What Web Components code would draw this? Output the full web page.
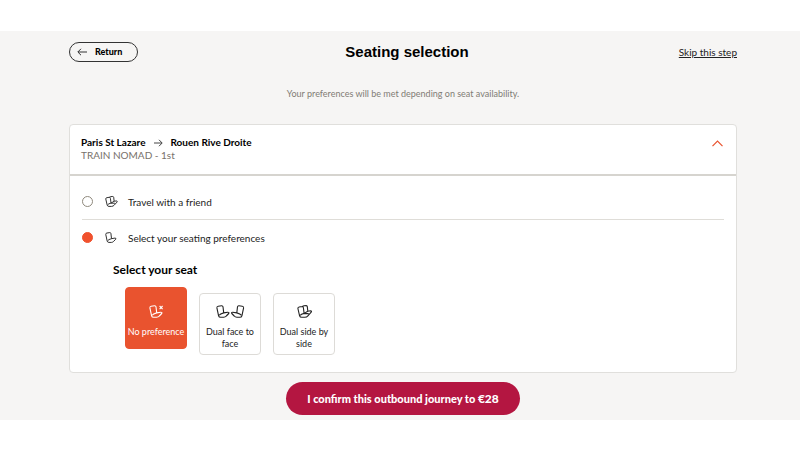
<!DOCTYPE html>
<html lang="en">
<head>
<meta charset="utf-8">
<meta name="viewport" content="width=device-width, initial-scale=1">
<title>Seating selection</title>
<style>
body { margin: 0; background: #fff; color: #111; font: 10px/12px Lato, "Liberation Sans", sans-serif; }
</style>
</head>
<body>
<seating-page>
  <page-header slot="header">Seating selection</page-header>
  <journey-card slot="card" from="Paris St Lazare" to="Rouen Rive Droite" service="TRAIN NOMAD - 1st">
    <seating-form></seating-form>
  </journey-card>
  <confirm-button slot="footer">I confirm this outbound journey to <span>€28</span></confirm-button>
</seating-page>
<script>
class Base extends HTMLElement {
  constructor() {
    super();
    this.attachShadow({ mode: 'open' });
  }
  connectedCallback() {
    this.shadowRoot.innerHTML = '<style>*{box-sizing:border-box}</style>' + this.render();
    this.ready();
  }
  ready() {}
}

customElements.define('seating-page', class extends Base {
  render() {
    return `<style>
      :host { display: block; padding: 31px 0 30px; }
      main { background: #f6f5f4; padding: 11px 63px 5px 69px; }
      p { margin: 26px 0 24px; text-align: center; font-size: 9px; color: #817c74; }
      footer { display: flex; justify-content: center; margin-top: 9px; }
    </style>
    <main>
      <slot name="header"></slot>
      <p>Your preferences will be met depending on seat availability.</p>
      <slot name="card"></slot>
      <footer><slot name="footer"></slot></footer>
    </main>`;
  }
});

customElements.define('page-header', class extends Base {
  render() {
    return `<style>
      :host { display: grid; grid-template-columns: 1fr auto 1fr; align-items: center; }
      h1 { margin: 0; padding-left: 8px; font: bold 15px/20px "Liberation Sans", Arial, sans-serif; color: #000; }
      button { justify-self: start; display: flex; align-items: center; gap: 8px; height: 20px; padding: 0 15px 0 7px;
        border: 1px solid #333; border-radius: 10px; background: transparent; color: #000; font: 900 9px/12px Lato, sans-serif; }
      svg { display: block; width: 10px; height: 8px; fill: none; stroke: #333; }
      a { justify-self: end; color: #222; text-decoration: underline; text-underline-offset: 1px; }
    </style>
    <button type="button"><svg viewBox="0 0 10 8" aria-hidden="true"><path d="M10 4H1M4 .8L.8 4 4 7.2"/></svg>Return</button>
    <h1><slot></slot></h1>
    <a href="#skip">Skip this step</a>`;
  }
});

customElements.define('journey-card', class extends Base {
  render() {
    const g = n => this.getAttribute(n);
    return `<style>
      :host { display: block; background: #fff; border: 1px solid #e0dfdc; border-radius: 4px; }
      header { display: flex; justify-content: space-between; align-items: flex-start; padding: 11px 13px 12px 11px;
        border-bottom: 2px solid #d6d4cf; }
      h2 { display: flex; align-items: center; gap: 8px; margin: 0; font: bold 10px/13px Lato, sans-serif; color: #000; }
      p { margin: 0; line-height: 13px; color: #77716a; }
      svg { display: block; fill: none; stroke: #444; }
      button { padding: 4px 0; margin: 0; border: 0; background: none; }
      button svg { stroke: #e9532f; stroke-width: 1.2; }
    </style>
    <header>
      <div>
        <h2>${g('from')}<svg width="9" height="8" viewBox="0 0 9 8" aria-hidden="true"><path d="M0 4h8M5 .8L8.2 4 5 7.2"/></svg>${g('to')}</h2>
        <p>${g('service')}</p>
      </div>
      <button type="button" aria-label="Collapse journey" aria-expanded="true"><svg width="11" height="7" viewBox="0 0 11 7"><path d="M.5 6.2L5.5 1l5 5.2"/></svg></button>
    </header>
    <slot></slot>`;
  }
});

const SEAT = '<path d="M2.2 1.2L5.6.7Q6.8.6 7 1.8L7.7 7.9 11.8 7.2Q13.5 7.2 12.7 8.5L10.3 11Q9.3 12.2 7.6 12.3H4.6Q3 12.3 2.6 10.8L.9 2.9Q.8 1.4 2.2 1.2ZM3.2 10.3Q4 8.8 7.7 7.9"/>';
const ICONS = {
  single: [13.5, SEAT],
  none: [15, SEAT + '<path d="M10.6 1l3 3.2M13.6 1l-3 3.2"/>'],
  facing: [28, SEAT + '<g transform="translate(28.5 0) scale(-1 1)">' + SEAT + '</g>'],
  side: [15, '<path d="M2.1 2L5.2 1.5 7 .7 9.2.6Q10.2.7 10.3 1.6L10.8 6.2 13.6 5.8Q15 6 14.2 7.2L10.9 10.8Q9.7 12.2 7.8 12.3H4.7Q3 12.3 2.6 10.8L.9 3.5Q.8 2.2 2.1 2ZM5.2 1.5Q6.3 1.6 6.4 2.8L7.1 8.4 10.8 6.2M3.2 10.4Q4 9.1 7.1 8.4L11.7 8.6"/>']
};
customElements.define('seat-icon', class extends Base {
  render() {
    const [w, art] = ICONS[this.getAttribute('kind')];
    return `<style>
      :host { display: block; }
      svg { display: block; height: var(--icon-height, 13px); width: auto; overflow: visible; fill: none; stroke: currentColor; stroke-width: 1.1; stroke-linejoin: round; }
    </style>
    <svg viewBox="0 0 ${w} 13" aria-hidden="true">${art}</svg>`;
  }
});

customElements.define('seat-choice', class extends Base {
  static get observedAttributes() { return ['selected']; }
  attributeChangedCallback() {
    const b = this.shadowRoot.querySelector('button');
    if (b) b.setAttribute('aria-pressed', this.hasAttribute('selected'));
  }
  render() {
    return `<style>
      :host { display: block; width: 62px; margin-top: 6px; }
      :host([selected]) { margin: 0 0 6px; }
      button { display: flex; flex-direction: column; align-items: center; gap: 8px; width: 100%; height: 62px; padding: 11px 0 0;
        border: 1px solid #dddbd7; border-radius: 4px; background: #fff; color: #222; font: 9px/12px Lato, sans-serif; }
      button[aria-pressed=true] { padding-top: 17px; background: #e9532f; border-color: #e9532f; color: #fff; }
      span { display: block; max-width: 58px; }
    </style>
    <button type="button" aria-pressed="${this.hasAttribute('selected')}"><seat-icon kind="${this.getAttribute('kind')}"></seat-icon><span><slot></slot></span></button>`;
  }
});

customElements.define('seating-form', class extends Base {
  render() {
    return `<style>
      :host { display: block; padding: 8px 12px 17px; }
      label { display: flex; align-items: center; height: 35px; color: #222; }
      label + label { height: 36px; border-top: 1px solid #dfddd8; }
      input { appearance: none; width: 11px; height: 11px; margin: 0 12px 0 0; border: 1px solid #8f897d; border-radius: 50%; background: #fff; }
      input:checked { background: #f0512d; border-color: #f0512d; }
      seat-icon { width: 23px; --icon-height: 11px; }
      h3 { margin: 7px 0 9px 31px; font: bold 12px/16px Lato, sans-serif; color: #000; }
      section { display: flex; gap: 12px; margin-left: 43px; }
    </style>
    <label><input type="radio" name="mode"><seat-icon kind="side"></seat-icon>Travel with a friend</label>
    <label><input type="radio" name="mode" checked><seat-icon kind="single"></seat-icon>Select your seating preferences</label>
    <h3>Select your seat</h3>
    <section>
      <seat-choice kind="none" selected>No preference</seat-choice>
      <seat-choice kind="facing">Dual face to face</seat-choice>
      <seat-choice kind="side">Dual side by side</seat-choice>
    </section>`;
  }
  ready() {
    const all = [...this.shadowRoot.querySelectorAll('seat-choice')];
    all.forEach(c => c.addEventListener('click', () => all.forEach(o => o.toggleAttribute('selected', o === c))));
  }
});

customElements.define('confirm-button', class extends Base {
  render() {
    return `<style>
      :host { display: block; }
      button { display: block; height: 33px; padding: 0 21px; border: 0; border-radius: 17px; background: #b41641; color: #fff;
        font: 900 11px/16px Lato, sans-serif; }
      ::slotted(span) { font-size: 12px; }
    </style>
    <button type="button"><slot></slot></button>`;
  }
});
</script>
</body>
</html>
